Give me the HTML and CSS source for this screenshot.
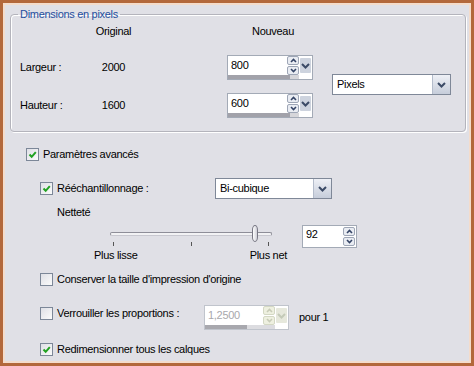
FILE: index.html
```html
<!DOCTYPE html>
<html>
<head>
    <title>Redimensionner</title>
    <link rel="stylesheet" href="styles.css">
</head>
<body>
<div class="dialog">

    <fieldset class="group">
        <legend>Dimensions en pixels</legend>
        <div class="dims">
            <span></span>
            <span class="col-head">Original</span>
            <span class="col-head new-head">Nouveau</span>
            <span></span>

            <span class="dim-label">Largeur :</span>
            <span class="dim-orig">2000</span>
            <div class="spin">
                <span class="spin-value">800</span>
                <span class="updown">
                    <i><svg width="7" height="5" viewBox="0 0 7 5"><path d="M1 4l2.5-2.5L6 4" fill="none" stroke="#344466" stroke-width="1.6"/></svg></i>
                    <i><svg width="7" height="5" viewBox="0 0 7 5"><path d="M1 1l2.5 2.5L6 1" fill="none" stroke="#344466" stroke-width="1.6"/></svg></i>
                </span>
                <span class="drop-btn"><svg width="9" height="6" viewBox="0 0 9 6"><path d="M1 1l3.5 3.5L8 1" fill="none" stroke="#3b4a66" stroke-width="2"/></svg></span>
                <span class="spin-bar"></span>
            </div>
            <div class="select units">
                <span class="select-value">Pixels</span>
                <span class="select-btn"><svg width="9" height="6" viewBox="0 0 9 6"><path d="M1 1l3.5 3.5L8 1" fill="none" stroke="#3b4a66" stroke-width="2"/></svg></span>
            </div>

            <span class="dim-label">Hauteur :</span>
            <span class="dim-orig">1600</span>
            <div class="spin">
                <span class="spin-value">600</span>
                <span class="updown">
                    <i><svg width="7" height="5" viewBox="0 0 7 5"><path d="M1 4l2.5-2.5L6 4" fill="none" stroke="#344466" stroke-width="1.6"/></svg></i>
                    <i><svg width="7" height="5" viewBox="0 0 7 5"><path d="M1 1l2.5 2.5L6 1" fill="none" stroke="#344466" stroke-width="1.6"/></svg></i>
                </span>
                <span class="drop-btn"><svg width="9" height="6" viewBox="0 0 9 6"><path d="M1 1l3.5 3.5L8 1" fill="none" stroke="#3b4a66" stroke-width="2"/></svg></span>
                <span class="spin-bar"></span>
            </div>
        </div>
    </fieldset>

    <div class="advanced">
        <div class="check row-adv">
            <span class="box"><svg width="11" height="11" viewBox="0 0 11 11"><path d="M2.5 5.5l2.2 2.3L8.8 3.2" fill="none" stroke="#22a222" stroke-width="2"/></svg></span>
            <span>Paramètres avancés</span>
        </div>

        <div class="row-resample">
            <div class="check resample-label">
                <span class="box"><svg width="11" height="11" viewBox="0 0 11 11"><path d="M2.5 5.5l2.2 2.3L8.8 3.2" fill="none" stroke="#22a222" stroke-width="2"/></svg></span>
                <span>Rééchantillonnage :</span>
            </div>
            <div class="select method">
                <span class="select-value">Bi-cubique</span>
                <span class="select-btn"><svg width="9" height="6" viewBox="0 0 9 6"><path d="M1 1l3.5 3.5L8 1" fill="none" stroke="#3b4a66" stroke-width="2"/></svg></span>
            </div>
        </div>

        <div class="sharp-title">Netteté</div>

        <div class="row-slider">
            <div class="slider">
                <div class="track-wrap">
                    <div class="track"></div>
                    <div class="thumb"></div>
                </div>
                <div class="ticks"><i></i><i></i><i></i></div>
                <div class="slider-labels"><span>Plus lisse</span><span>Plus net</span></div>
            </div>
            <div class="num">
                <span class="num-value">92</span>
                <span class="num-updown">
                    <i><svg width="7" height="5" viewBox="0 0 7 5"><path d="M1 4l2.5-2.5L6 4" fill="none" stroke="#344466" stroke-width="1.6"/></svg></i>
                    <i><svg width="7" height="5" viewBox="0 0 7 5"><path d="M1 1l2.5 2.5L6 1" fill="none" stroke="#344466" stroke-width="1.6"/></svg></i>
                </span>
            </div>
        </div>

        <div class="check row-keep">
            <span class="box"></span>
            <span>Conserver la taille d'impression d'origine</span>
        </div>

        <div class="row-lock">
            <div class="check lock-label">
                <span class="box"></span>
                <span>Verrouiller les proportions :</span>
            </div>
            <div class="spin disabled">
                <span class="spin-value">1,2500</span>
                <span class="updown">
                    <i><svg width="7" height="5" viewBox="0 0 7 5"><path d="M1 4l2.5-2.5L6 4" fill="none" stroke="#c8ccb8" stroke-width="1.6"/></svg></i>
                    <i><svg width="7" height="5" viewBox="0 0 7 5"><path d="M1 1l2.5 2.5L6 1" fill="none" stroke="#c8ccb8" stroke-width="1.6"/></svg></i>
                </span>
                <span class="drop-btn"><svg width="9" height="6" viewBox="0 0 9 6"><path d="M1 1l3.5 3.5L8 1" fill="none" stroke="#c4cab8" stroke-width="2"/></svg></span>
                <span class="spin-bar"></span>
            </div>
            <span class="per-one">pour 1</span>
        </div>

        <div class="check row-all">
            <span class="box"><svg width="11" height="11" viewBox="0 0 11 11"><path d="M2.5 5.5l2.2 2.3L8.8 3.2" fill="none" stroke="#22a222" stroke-width="2"/></svg></span>
            <span>Redimensionner tous les calques</span>
        </div>
    </div>

</div>
</body>
</html>
```

FILE: styles.css
```css
body {
    margin: 0;
    font-family: "Liberation Sans", Arial, sans-serif;
    font-size: 11px;
    letter-spacing: -0.3px;
    color: #000;
}

.dialog {
    width: 474px;
    height: 366px;
    box-sizing: border-box;
    border: 3px solid #b3683b;
    box-shadow: inset 0 0 0 2px #f4dccb;
    background-color: #e0e0e6;
    padding: 5px 5px 0 7px;
}

/* group box */
.group {
    margin: 0;
    padding: 4px 9px 13px 9px;
    border: 1px solid #b4b4bc;
    border-radius: 4px;
    box-shadow: inset 1px 1px 0 #fff, 1px 1px 0 #fff;
    min-width: 0;
}

.group legend {
    padding: 0 2px;
    margin-left: -2px;
    color: #1f4f9e;
    line-height: 13px;
}

.dims {
    display: grid;
    grid-template-columns: 70px 47px 176px 138px;
    grid-template-rows: 17px 25px 25px;
    row-gap: 13px;
}

.col-head {
    line-height: 13px;
    text-align: center;
}

.new-head {
    justify-self: end;
    width: 80px;
}

.dim-label,
.dim-orig {
    align-self: center;
    line-height: 13px;
}

.dim-orig {
    text-align: center;
}

.dims .spin {
    justify-self: end;
}

.units {
    grid-column: 4;
    grid-row: 2 / span 2;
    justify-self: end;
    align-self: center;
    margin-bottom: 4px;
    width: 119px;
}

/* spin edit */
.spin {
    display: grid;
    grid-template-columns: 1fr 12px 13px;
    grid-template-rows: 19px 4px;
    width: 86px;
    box-sizing: border-box;
    border: 1px solid #a3aab6;
    background-color: #fff;
}

.spin-value {
    padding-left: 3px;
    line-height: 19px;
}

.updown {
    display: flex;
    flex-direction: column;
    justify-content: center;
    gap: 1px;
}

.updown i,
.num-updown i {
    display: flex;
    align-items: center;
    justify-content: center;
    width: 10px;
    height: 7px;
    border: 1px solid #9ea6b6;
    border-radius: 2px;
    background-color: #e9ecf2;
}

.drop-btn {
    grid-row: 1 / span 2;
    grid-column: 3;
    display: flex;
    align-items: center;
    justify-content: center;
    margin: 2px 1px 6px 1px;
    background-color: #cdd3de;
    border-radius: 1px;
}

.spin-bar {
    grid-column: 1 / span 2;
    background: linear-gradient(to right, #a2a2aa 0, #a2a2aa 87%, #d6d6da 87%);
}

.spin.disabled {
    width: 85px;
    border-color: #c0c4cc;
}

.spin.disabled .spin-value {
    color: #a8a8ac;
}

.spin.disabled .updown i {
    border-color: #d4d8c4;
    background-color: #eef0e0;
}

.spin.disabled .drop-btn {
    background-color: #e6e8dc;
}

.spin.disabled .spin-bar {
    background: linear-gradient(to right, #a8a8ae 0, #a8a8ae 60%, #dcdce0 60%);
}

/* drop-down list */
.select {
    display: flex;
    height: 21px;
    box-sizing: border-box;
    border: 1px solid #7f8898;
    background-color: #fff;
}

.select-value {
    flex: 1;
    padding-left: 4px;
    line-height: 19px;
}

.select-btn {
    display: flex;
    align-items: center;
    justify-content: center;
    width: 17px;
    border-left: 1px solid #b4bccb;
    background: linear-gradient(#eef0f6, #c6cdda);
}

/* advanced part */
.advanced {
    display: flex;
    flex-direction: column;
    padding-left: 16px;
}

.check {
    display: flex;
    align-items: center;
    gap: 4px;
    line-height: 13px;
}

.box {
    display: flex;
    align-items: center;
    justify-content: center;
    width: 13px;
    height: 13px;
    box-sizing: border-box;
    border: 1px solid #7c8798;
    background: linear-gradient(135deg, #dfe0e6, #fbfbfb);
}

.row-adv {
    margin-top: 16px;
}

.row-resample {
    display: flex;
    align-items: center;
    margin-top: 17px;
    padding-left: 14px;
}

.resample-label {
    width: 175px;
}

.method {
    width: 117px;
}

.sharp-title {
    margin-top: 7px;
    padding-left: 31px;
    line-height: 13px;
}

.row-slider {
    display: flex;
    align-items: flex-start;
    margin-top: 6px;
    margin-left: 68px;
}

.slider {
    width: 193px;
}

.track-wrap {
    position: relative;
    height: 17px;
}

.track {
    position: relative;
    top: 7px;
    margin-left: 16px;
    width: 162px;
    height: 4px;
    box-sizing: border-box;
    border: 1px solid #8e8e98;
    border-bottom-color: #c8c8d0;
    border-radius: 2px;
    background-color: #f2f2f4;
}

.thumb {
    position: absolute;
    left: 158px;
    top: 0;
    width: 6px;
    height: 17px;
    box-sizing: border-box;
    border: 1px solid #787884;
    border-radius: 3px / 5px;
    background: linear-gradient(to right, #ffffff, #d0d0d8);
}

.ticks {
    display: flex;
    justify-content: space-between;
    margin-left: 19px;
    width: 156px;
    height: 7px;
}

.ticks i {
    width: 1px;
    height: 4px;
    background-color: #555;
}

.slider-labels {
    display: flex;
    justify-content: space-between;
    line-height: 13px;
}

.num {
    display: flex;
    margin-left: 15px;
    width: 55px;
    height: 23px;
    box-sizing: border-box;
    border: 1px solid #a3aab6;
    background-color: #fff;
}

.num-value {
    flex: 1;
    padding-left: 3px;
    line-height: 17px;
}

.num-updown {
    display: flex;
    flex-direction: column;
    justify-content: center;
    gap: 1px;
    margin-right: 1px;
}

.row-keep {
    margin-top: 11px;
    padding-left: 14px;
}

.row-lock {
    display: flex;
    align-items: flex-start;
    margin-top: 19px;
    padding-left: 14px;
}

.lock-label {
    width: 164px;
    margin-top: 2px;
}

.per-one {
    align-self: center;
    margin-left: 10px;
    line-height: 13px;
}

.row-all {
    margin-top: 13px;
    padding-left: 14px;
}
```
